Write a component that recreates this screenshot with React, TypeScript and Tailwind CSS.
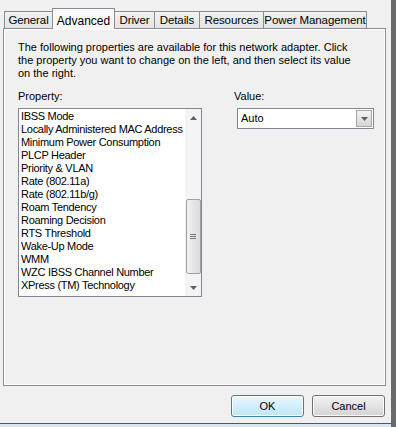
const tabs = [
    { label: 'General', w: 'w-[49px]' },
    { label: 'Advanced', w: 'w-[63px]', active: true },
    { label: 'Driver', w: 'w-[41px]' },
    { label: 'Details', w: 'w-[46px]' },
    { label: 'Resources', w: 'w-[65px]' },
    { label: 'Power Management', w: 'w-[104px]' },
];

const props = [
    'IBSS Mode',
    'Locally Administered MAC Address',
    'Minimum Power Consumption',
    'PLCP Header',
    'Priority & VLAN',
    'Rate (802.11a)',
    'Rate (802.11b/g)',
    'Roam Tendency',
    'Roaming Decision',
    'RTS Threshold',
    'Wake-Up Mode',
    'WMM',
    'WZC IBSS Channel Number',
    'XPress (TM) Technology',
];

const font = { fontFamily: 'Tahoma, "Liberation Sans", Arial, sans-serif' };

const Arrow = ({ up }: { up?: boolean }) => (
    <svg width="7" height="4" viewBox="0 0 7 4" className="text-[#606060]" fill="currentColor">
        {up ? <path d="M3.5 0L7 4H0Z" /> : <path d="M0 0H7L3.5 4Z" />}
    </svg>
);

const App = () => {
    return (
        <div className="flex h-[427px] w-[396px] bg-[#f0f0f0] text-[11px] text-black" style={font}>
            <div className="flex flex-1 flex-col">
                <div className="flex flex-1 flex-col pl-[3px] pt-[8px]">
                    {/* tab strip */}
                    <div className="flex h-[20px] items-end pl-px">
                        {tabs.map((t) =>
                            t.active ? (
                                <div
                                    key={t.label}
                                    className={`${t.w} relative z-10 -mb-px -ml-px flex h-[21px] items-start justify-center whitespace-nowrap border border-b-0 border-[#898c95] bg-[#f9f9f9] pt-[3px] text-[12px]`}
                                >
                                    {t.label}
                                </div>
                            ) : (
                                <div
                                    key={t.label}
                                    className={`${t.w} -ml-px flex h-[17px] items-center justify-center whitespace-nowrap border border-b-0 border-[#898c95] bg-gradient-to-b from-[#f2f2f2] to-[#e3e3e3] pt-px text-[11.5px] tracking-[-0.1px] first:ml-0`}
                                >
                                    {t.label}
                                </div>
                            )
                        )}
                    </div>

                    {/* panel */}
                    <div className="mr-[4px] flex h-[358px] w-[383px] flex-col border border-[#898c95] bg-[#f9f9f9]">
                        <div className="flex flex-1 flex-col border border-white bg-[#f0f0f0] pl-[13px] pt-[11px]">
                            <p className="leading-[13px]">
                                The following properties are available for this network adapter. Click
                                <br />
                                the property you want to change on the left, and then select its value
                                <br />
                                on the right.
                            </p>

                            <div className="mt-[10px] flex">
                                <div className="flex w-[184px] flex-col">
                                    <span className="leading-[13px]">Property:</span>
                                    <div className="mt-[5px] flex h-[189px] border border-[#828790] bg-white">
                                        <ul className="min-w-0 flex-1 pl-[2px] pt-px leading-[13px] tracking-[-0.3px]">
                                            {props.map((p) => (
                                                <li key={p} className="whitespace-nowrap">
                                                    {p}
                                                </li>
                                            ))}
                                        </ul>
                                        <div className="flex w-[16px] shrink-0 flex-col items-center bg-[#f4f4f4]">
                                            <div className="flex h-[17px] w-full items-center justify-center">
                                                <Arrow up />
                                            </div>
                                            <div className="flex-1" />
                                            <div className="flex h-[75px] w-[15px] items-center justify-center rounded-[2px] border border-[#a0a0a0] bg-gradient-to-r from-[#f0f0f0] to-[#dcdcdc]">
                                                <div className="flex flex-col gap-px">
                                                    <div className="h-px w-[6px] bg-[#777]" />
                                                    <div className="h-px w-[6px] bg-[#777]" />
                                                    <div className="h-px w-[6px] bg-[#777]" />
                                                </div>
                                            </div>
                                            <div className="h-[5px]" />
                                            <div className="flex h-[17px] w-full items-center justify-center">
                                                <Arrow />
                                            </div>
                                        </div>
                                    </div>
                                </div>

                                <div className="ml-[32px] flex flex-col">
                                    <span className="leading-[13px]">Value:</span>
                                    <div className="ml-[3px] mt-[5px] flex h-[21px] w-[137px] items-center border border-[#828790] bg-white pl-[3px] pr-px">
                                        <span className="flex-1">Auto</span>
                                        <div className="flex h-[17px] w-[16px] items-center justify-center border border-[#a7a7a7] bg-gradient-to-b from-[#f3f3f3] to-[#d5d5d5]">
                                            <Arrow />
                                        </div>
                                    </div>
                                </div>
                            </div>
                        </div>
                    </div>

                    {/* buttons */}
                    <div className="flex justify-end gap-[8px] pr-[6px] pt-[9px]">
                        <button className="flex h-[22px] w-[73px] items-center justify-center rounded-[3px] border border-[#3c7fb1] bg-gradient-to-b from-[#eaf6fd] to-[#bee6fd] shadow-[inset_0_0_0_1px_#ffffff]">
                            OK
                        </button>
                        <button className="flex h-[22px] w-[73px] items-center justify-center rounded-[3px] border border-[#707070] bg-gradient-to-b from-[#f2f2f2] to-[#d4d4d4] shadow-[inset_0_0_0_1px_#fcfcfc]">
                            Cancel
                        </button>
                    </div>
                </div>
                <div className="h-px bg-[#4c5866]" />
                <div className="h-[3px] bg-[#d6e4f3]" />
            </div>
            <div className="w-[5px] bg-[#6a6a6a]" />
        </div>
    );
};

export default App;
